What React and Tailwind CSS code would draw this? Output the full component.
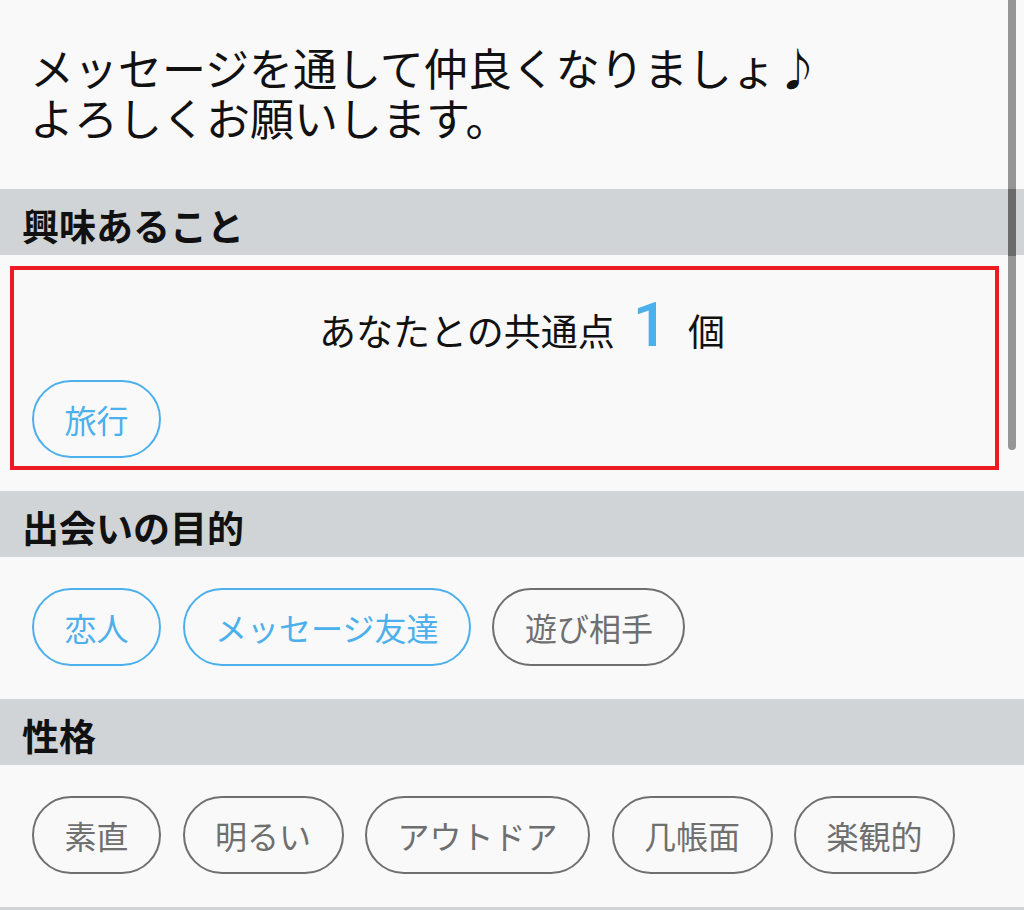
import React from "react";

function Header({ children }) {
  return (
    <div className="h-[66px] bg-[#d1d4d7] pl-[22px] pt-[6px] flex items-center">
      <span className="text-[37px] leading-[50px] font-bold text-[#111111]">{children}</span>
    </div>
  );
}

function Pill({ children, active }) {
  return (
    <div
      className={
        active
          ? "h-[78px] px-[30.5px] flex items-center rounded-full border-2 border-[#4cb0ec] text-[#4cb0ec] text-[32px] leading-none"
          : "h-[78px] px-[30.5px] flex items-center rounded-full border-2 border-[#6f6f6f] text-[#6f6f6f] text-[32px] leading-none"
      }
    >
      {children}
    </div>
  );
}

export default function App() {
  return (
    <div className="relative w-[1024px] h-[910px] overflow-hidden bg-[#f9f9f9] font-['Noto_Sans_CJK_JP',sans-serif] text-[#111111]">
      <div className="h-[189px] pt-[42px] pl-[30px] text-[44px] leading-[50px]">
        <p>メッセージを通して仲良くなりましょ♪</p>
        <p>よろしくお願いします。</p>
      </div>

      <Header>興味あること</Header>
      <div className="h-[236px] pt-[11px] px-[10px]">
        <div className="w-[989px] h-[204px] border-4 border-[#ed1c24] pl-[18px] pt-[30px]">
          <div className="h-[50px] flex items-baseline justify-center pl-[17px] text-[37px] leading-[50px]">
            <span>あなたとの共通点</span>
            <span className="ml-[18px] mr-[20px] font-['Roboto',sans-serif] font-medium text-[62px] leading-[50px] text-[#4cb0ec]">1</span>
            <span>個</span>
          </div>
          <div className="mt-[30px] flex">
            <Pill active>旅行</Pill>
          </div>
        </div>
      </div>

      <Header>出会いの目的</Header>
      <div className="h-[142px] pt-[31px] pl-[32px] flex items-start gap-[21.5px]">
        <Pill active>恋人</Pill>
        <Pill active>メッセージ友達</Pill>
        <Pill>遊び相手</Pill>
      </div>

      <Header>性格</Header>
      <div className="h-[142px] pt-[31px] pl-[32px] flex items-start gap-[21.5px]">
        <Pill>素直</Pill>
        <Pill>明るい</Pill>
        <Pill>アウトドア</Pill>
        <Pill>几帳面</Pill>
        <Pill>楽観的</Pill>
      </div>
      <div className="h-[66px] bg-[#d1d4d7]"></div>

      <div className="absolute top-0 left-[1008px] w-[8px] h-[450px] rounded-b-full bg-[#969696]">
        <div className="absolute top-[189px] left-0 w-[8px] h-[67px] bg-[#6b6b6b]"></div>
      </div>
    </div>
  );
}
